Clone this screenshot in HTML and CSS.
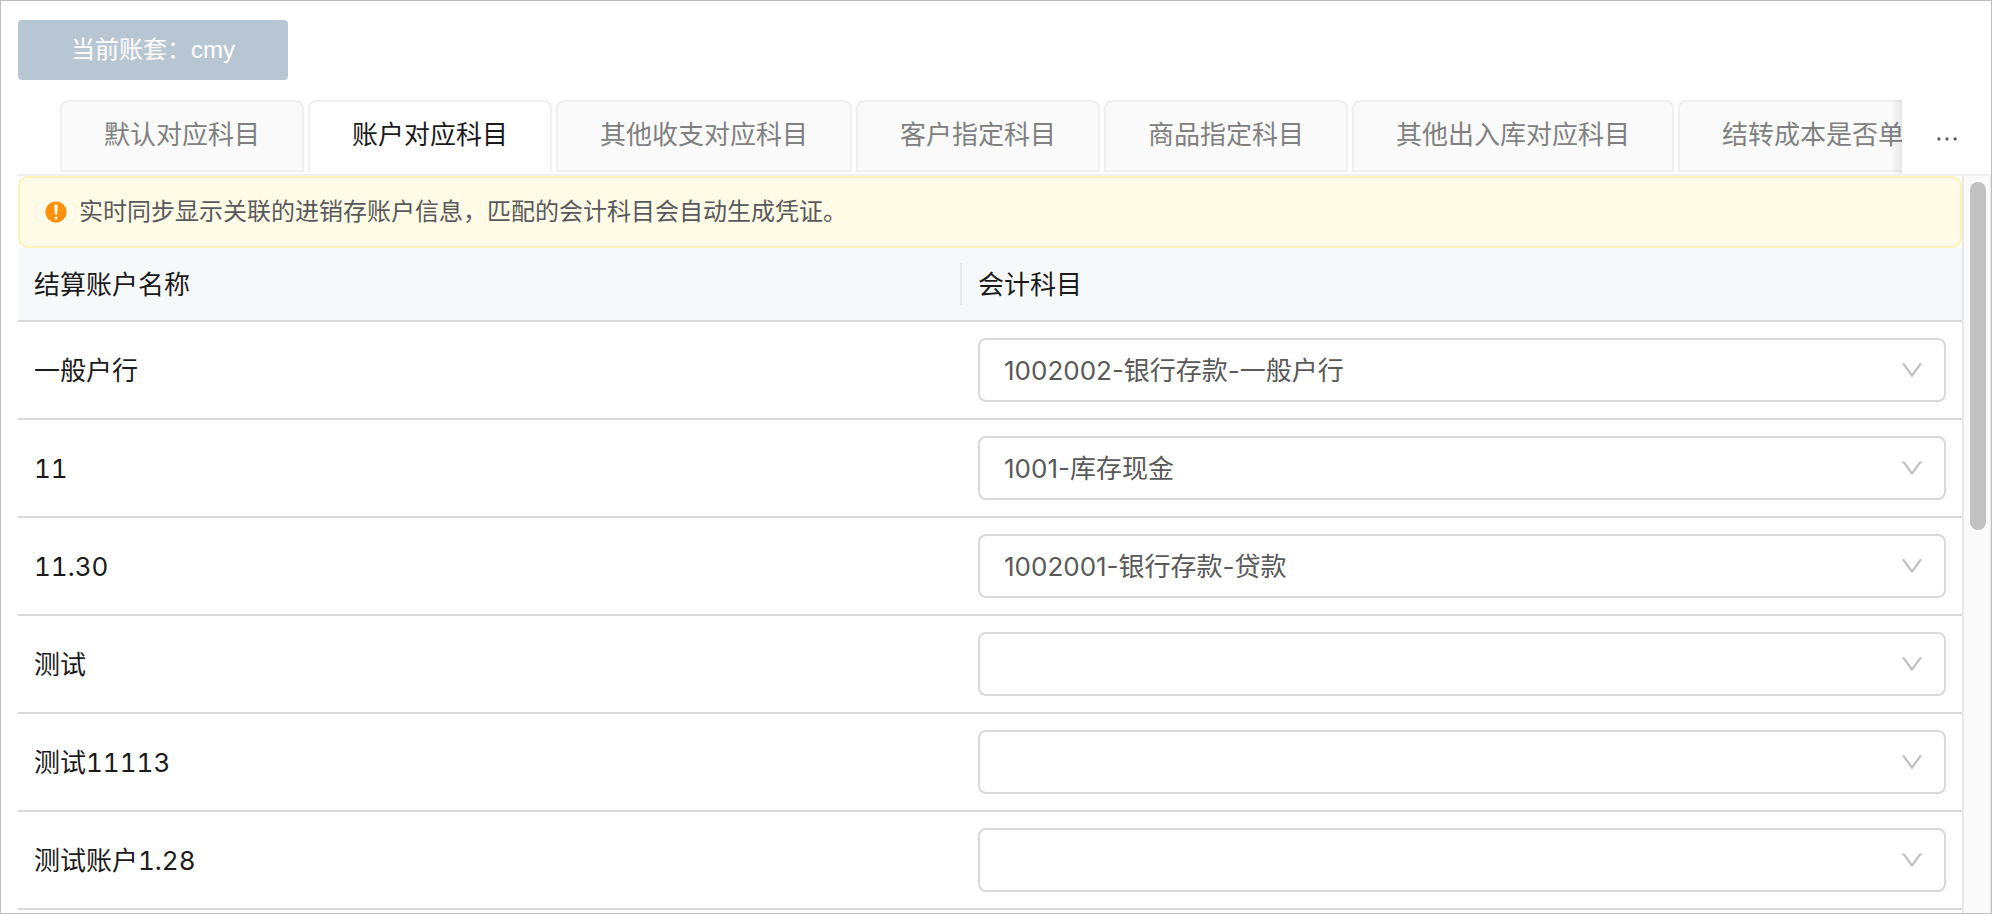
FILE: index.html
```html
<!DOCTYPE html>
<html lang="zh-CN">
<head>
<meta charset="utf-8">
<title>账户对应科目</title>
<link rel="stylesheet" href="styles.css">
</head>
<body>
<svg class="sprite" aria-hidden="true">
  <symbol id="down" viewBox="64 64 896 896"><path d="M884 256h-75c-5.100 0-9.900 2.500-12.900 6.600L512 654.200 227.900 262.600c-3-4.100-7.800-6.600-12.900-6.600h-75c-6.500 0-10.300 7.400-6.500 12.700l352.600 486.100c12.800 17.600 39 17.600 51.700 0l352.600-486.100c3.900-5.300.1-12.700-6.400-12.700z"/></symbol>
</svg>
<main class="page">
  <div class="toolbar"><button class="account" type="button">当前账套：cmy</button></div>
  <nav class="tabs">
    <div class="tab-list" role="tablist">
      <button class="tab" type="button" role="tab">默认对应科目</button>
      <button class="tab active" type="button" role="tab" aria-selected="true">账户对应科目</button>
      <button class="tab" type="button" role="tab">其他收支对应科目</button>
      <button class="tab" type="button" role="tab">客户指定科目</button>
      <button class="tab" type="button" role="tab">商品指定科目</button>
      <button class="tab" type="button" role="tab">其他出入库对应科目</button>
      <button class="tab" type="button" role="tab">结转成本是否单</button>
    </div>
    <button class="more" type="button" aria-label="更多"><svg viewBox="64 64 896 896"><path d="M176 511a56 56 0 10112 0 56 56 0 10-112 0zm280 0a56 56 0 10112 0 56 56 0 10-112 0zm280 0a56 56 0 10112 0 56 56 0 10-112 0z"/></svg></button>
  </nav>
  <div class="body">
    <section class="content">
      <div class="alert" role="alert">
        <svg viewBox="0 0 22 22"><circle class="disc" cx="11" cy="11" r="10.600"/><path class="mark" d="M11 3.200c1.100 0 1.900.8 1.800 1.900l-.6 7.600c-.1.700-.5 1.100-1.200 1.100s-1.100-.4-1.200-1.100l-.6-7.600c-.1-1.100.7-1.900 1.800-1.900z"/><circle class="mark" cx="11" cy="17" r="1.500"/></svg>
        <span>实时同步显示关联的进销存账户信息，匹配的会计科目会自动生成凭证。</span>
      </div>
      <table class="grid">
        <thead><tr><th class="name" scope="col"><div class="head">结算账户名称</div></th><th scope="col"><div class="head">会计科目</div></th></tr></thead>
        <tbody>
          <tr><td><label for="s1">一般户行</label></td><td><div class="field"><select id="s1"><option>1002002-银行存款-一般户行</option></select><svg><use href="#down"/></svg></div></td></tr>
          <tr><td><label for="s2">11</label></td><td><div class="field"><select id="s2"><option>1001-库存现金</option></select><svg><use href="#down"/></svg></div></td></tr>
          <tr><td><label for="s3">11.30</label></td><td><div class="field"><select id="s3"><option>1002001-银行存款-贷款</option></select><svg><use href="#down"/></svg></div></td></tr>
          <tr><td><label for="s4">测试</label></td><td><div class="field"><select id="s4"><option></option></select><svg><use href="#down"/></svg></div></td></tr>
          <tr><td><label for="s5">测试11113</label></td><td><div class="field"><select id="s5"><option></option></select><svg><use href="#down"/></svg></div></td></tr>
          <tr><td><label for="s6">测试账户1.28</label></td><td><div class="field"><select id="s6"><option></option></select><svg><use href="#down"/></svg></div></td></tr>
        </tbody>
      </table>
    </section>
    <div class="scrollbar"><div class="thumb"></div></div>
  </div>
</main>
</body>
</html>
```

FILE: styles.css
```css
* { box-sizing: border-box; }

body {
  margin: 0;
  background: #fff;
  color: #1a1a1a;
  font: 26px/40px Inter, "Noto Sans CJK SC", sans-serif;
}

button, select { font: inherit; margin: 0; }

.sprite { position: absolute; width: 0; height: 0; }

.page {
  display: flex;
  flex-direction: column;
  height: 100vh;
  overflow: hidden;
  border: 1px solid #bfbfbf;
  padding-left: 17px;
}

.toolbar { padding: 19px 0 20px; }

.account {
  display: block;
  height: 60px;
  padding: 0 53px;
  border: 0;
  border-radius: 4px;
  background: #b8c6d4;
  color: #fff;
  font-family: "Liberation Sans", "Noto Sans CJK SC", sans-serif;
  font-size: 24px;
}

.tabs {
  display: flex;
  flex: none;
  height: 76px;
  border-bottom: 2px solid #f0f0f0;
}

.tab-list {
  position: relative;
  display: flex;
  flex: 1;
  gap: 4px;
  min-width: 0;
  overflow: hidden;
  padding-left: 42px;
}

.tab-list::after {
  content: "";
  position: absolute;
  inset: 0 0 0 auto;
  width: 12px;
  background: linear-gradient(to right, rgba(0, 0, 0, 0), rgba(0, 0, 0, 0.08));
}

.tab {
  flex: none;
  height: 72px;
  padding: 0 42px 2px;
  border: 2px solid #f0f0f0;
  border-radius: 8px 8px 0 0;
  background: #fafafa;
  color: #808080;
  white-space: nowrap;
}

.tab.active {
  border-bottom-color: #fff;
  background: #fff;
  color: #1a1a1a;
}

.more {
  display: flex;
  align-items: center;
  justify-content: center;
  width: 89px;
  padding: 4px 0 0;
  border: 0;
  background: #fff;
}

.more svg { width: 26px; height: 26px; fill: #595959; }

.body { display: flex; flex: 1; min-height: 0; }

.content { flex: 1; min-width: 0; overflow: hidden; }

.alert {
  display: flex;
  align-items: center;
  gap: 12px;
  height: 72px;
  padding: 0 25px;
  border: 2px solid #fff1b8;
  border-radius: 10px;
  background: #fffbe6;
  color: #595959;
  font-size: 24px;
}

.alert svg { width: 22px; height: 22px; }
.alert .disc { fill: #ff900a; }
.alert .mark { fill: #fffbe6; }

.grid {
  width: 100%;
  border-collapse: separate;
  border-spacing: 0;
  table-layout: fixed;
}

th, td {
  padding: 16px;
  border-bottom: 2px solid #d9d9d9;
  text-align: left;
}

th { padding: 15px 0; background: #f7f8fa; font-weight: 400; }

.head { height: 42px; padding: 2px 0 0 16px; }

.name { width: 48.56%; }

.name .head { border-right: 2px solid #e8e8e8; }

td label {
  display: block;
  padding-top: 2px;
  font-variant-numeric: tabular-nums;
}

.field { position: relative; }

.field select {
  display: block;
  width: 100%;
  height: 64px;
  padding: 2px 60px 0 24px;
  border: 2px solid #d9d9d9;
  border-radius: 8px;
  background: #fff;
  color: #595959;
  appearance: none;
}

.field svg {
  position: absolute;
  top: 20px;
  right: 22px;
  width: 24px;
  height: 24px;
  fill: #bfbfbf;
  pointer-events: none;
}

.scrollbar {
  width: 29px;
  padding: 6px;
  border: solid #e8e8e8;
  border-width: 0 1px 0 2px;
  background: #fafafa;
}

.thumb { width: 16px; height: 48%; border-radius: 8px; background: #c1c1c1; }
```
